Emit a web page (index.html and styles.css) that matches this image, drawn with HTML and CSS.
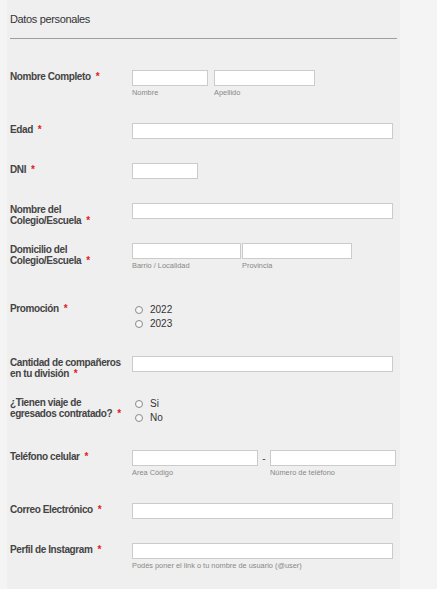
FILE: index.html
```html
<!DOCTYPE html>
<html lang="es">
<head>
<meta charset="utf-8">
<title>Datos personales</title>
<link rel="stylesheet" href="styles.css">
</head>
<body>
<div class="panel">
  <div class="section-title">Datos personales</div>
  <div class="rows">
    <div class="row">
      <div class="label">Nombre Completo<span class="req">*</span></div>
      <div class="field">
        <div class="group gap6">
          <div class="sub"><input class="inp w76" type="text"><span class="hint">Nombre</span></div>
          <div class="sub"><input class="inp w101" type="text"><span class="hint">Apellido</span></div>
        </div>
      </div>
    </div>
    <div class="row">
      <div class="label">Edad<span class="req">*</span></div>
      <div class="field"><input class="inp wfull" type="text"></div>
    </div>
    <div class="row">
      <div class="label">DNI<span class="req">*</span></div>
      <div class="field"><input class="inp w66" type="text"></div>
    </div>
    <div class="row">
      <div class="label">Nombre del<br>Colegio/Escuela<span class="req">*</span></div>
      <div class="field"><input class="inp wfull" type="text"></div>
    </div>
    <div class="row">
      <div class="label">Domicilio del<br>Colegio/Escuela<span class="req">*</span></div>
      <div class="field">
        <div class="group gap1">
          <div class="sub"><input class="inp w109" type="text"><span class="hint">Barrio / Localidad</span></div>
          <div class="sub"><input class="inp w110" type="text"><span class="hint">Provincia</span></div>
        </div>
      </div>
    </div>
    <div class="row row-shift">
      <div class="label">Promoción<span class="req">*</span></div>
      <div class="field radios">
        <label class="radio"><span class="dot"></span>2022</label>
        <label class="radio"><span class="dot"></span>2023</label>
      </div>
    </div>
    <div class="row">
      <div class="label">Cantidad de compañeros<br>en tu división<span class="req">*</span></div>
      <div class="field"><input class="inp wfull" type="text"></div>
    </div>
    <div class="row">
      <div class="label">¿Tienen viaje de<br>egresados contratado?<span class="req">*</span></div>
      <div class="field radios">
        <label class="radio"><span class="dot"></span>Si</label>
        <label class="radio"><span class="dot"></span>No</label>
      </div>
    </div>
    <div class="row">
      <div class="label">Teléfono celular<span class="req">*</span></div>
      <div class="field">
        <div class="group">
          <div class="sub"><input class="inp w126" type="text"><span class="hint">Area Código</span></div>
          <span class="dash">-</span>
          <div class="sub"><input class="inp w126" type="text"><span class="hint">Número de teléfono</span></div>
        </div>
      </div>
    </div>
    <div class="row">
      <div class="label">Correo Electrónico<span class="req">*</span></div>
      <div class="field"><input class="inp wfull" type="text"></div>
    </div>
    <div class="row">
      <div class="label">Perfil de Instagram<span class="req">*</span></div>
      <div class="field">
        <div class="sub"><input class="inp wfull" type="text"><span class="hint">Podés poner el link o tu nombre de usuario (@user)</span></div>
      </div>
    </div>
  </div>
</div>
</body>
</html>
```
FILE: styles.css
```css
html, body {
  margin: 0;
  padding: 0;
  background: #f4f4f4;
  font-family: "Liberation Sans", Arial, sans-serif;
}

.panel {
  margin-left: 7px;
  width: 393px;
  box-sizing: border-box;
  padding: 12px 3px 0 3px;
  min-height: 100vh;
  background: #efefef;
}

.section-title {
  font-size: 11px;
  line-height: 14px;
  letter-spacing: -0.35px;
  color: #333;
  padding-bottom: 12px;
  border-bottom: 1px solid #9e9e9e;
}

.rows {
  padding-top: 31px;
}

.row {
  display: flex;
  align-items: flex-start;
  padding-bottom: 24px;
}

.row-shift {
  margin-top: 6px;
}

.label {
  width: 122px;
  height: 16px;
  box-sizing: border-box;
  flex: none;
  padding-top: 1px;
  font-size: 10px;
  line-height: 11px;
  font-weight: bold;
  letter-spacing: -0.4px;
  color: #444;
  white-space: nowrap;
}

.req {
  color: #e02020;
  padding-left: 5px;
  letter-spacing: 0;
}

.field {
  flex: 1;
  min-width: 0;
}

.group {
  display: flex;
  align-items: flex-start;
}

.gap6 { gap: 6px; }
.gap1 { gap: 1px; }

.sub {
  display: flex;
  flex-direction: column;
}

.inp {
  display: block;
  box-sizing: border-box;
  height: 16px;
  margin: 0;
  padding: 0 3px;
  border: 1px solid #cbcbcb;
  border-radius: 0;
  background: #fff;
  font-family: "Liberation Sans", Arial, sans-serif;
  font-size: 10px;
  outline: none;
}

.wfull { width: 261px; }
.w76 { width: 76px; }
.w101 { width: 101px; }
.w66 { width: 66px; }
.w109 { width: 109px; }
.w110 { width: 110px; }
.w126 { width: 126px; }

.hint {
  display: block;
  font-size: 7.4px;
  line-height: 13px;
  color: #888;
  white-space: nowrap;
}

.dash {
  width: 12px;
  text-align: center;
  font-size: 10px;
  line-height: 18px;
  color: #444;
}

.radios {
  padding-bottom: 2px;
}

.radio {
  display: flex;
  align-items: center;
  height: 14px;
  font-size: 10px;
  color: #333;
}

.dot {
  flex: none;
  box-sizing: border-box;
  width: 8px;
  height: 8px;
  margin: 2px 7px 0 3px;
  border: 1px solid #8a8a8a;
  border-radius: 50%;
  background: #f7f7f7;
}
```
